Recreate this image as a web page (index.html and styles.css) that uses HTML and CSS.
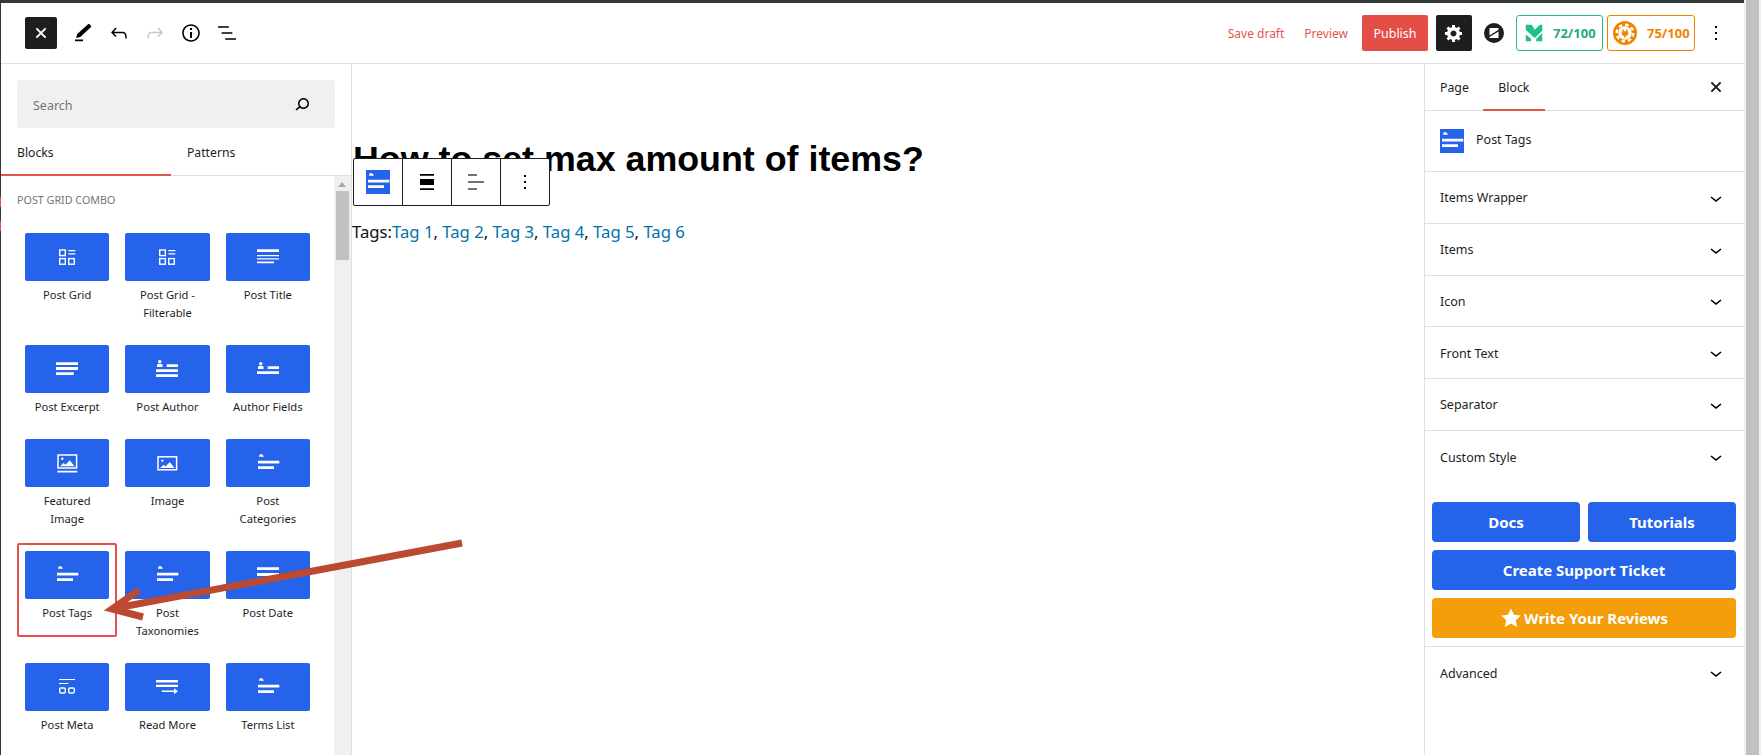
FILE: index.html
```html
<!DOCTYPE html>
<html lang="en">
<head>
<meta charset="utf-8">
<title>Post Tags</title>
<link rel="stylesheet" href="styles.css">
</head>
<body>
<svg class="defs" aria-hidden="true">
  <symbol id="i-grid" viewBox="0 0 24 24"><g fill="none" stroke="#fff" stroke-width="1.4"><rect x="4.7" y="5" width="5.6" height="5.6"/><rect x="4.7" y="13.6" width="5.6" height="5.6"/><rect x="13.7" y="13.6" width="5.6" height="5.6"/></g><path fill="#fff" d="M13.3 5h7v1.3h-7zM13.3 8.2h7v1.3h-7z"/></symbol>
  <symbol id="i-title" viewBox="0 0 24 24"><path fill="#fff" d="M1 4.3h22V7H1zM1 10h22v1.2H1zM1 13.2h22v1.2H1zM1 16.6h17v1.6H1z"/></symbol>
  <symbol id="i-excerpt" viewBox="0 0 24 24"><path fill="#fff" d="M1 5.3h22V8H1zM1 10h22v3H1zM1 15.3h17.7v2.7H1z"/></symbol>
  <symbol id="i-author" viewBox="0 0 24 24"><circle cx="4.7" cy="4.6" r="1.7" fill="#fff"/><path fill="#fff" d="M2 10V8.2C2 7 3 6.8 4.7 6.8s2.9.2 2.9 1.4V10zM11.7 7.2H23V10H11.7zM1 12.2h22V15H1zM1 17.2h22V20H1z"/></symbol>
  <symbol id="i-fields" viewBox="0 0 24 24"><circle cx="4.7" cy="6.6" r="1.7" fill="#fff"/><path fill="#fff" d="M2 12v-1.8C2 9 3 8.8 4.7 8.8s2.9.2 2.9 1.4V12zM11.7 9.2H23V12H11.7zM1 14.2h22V17H1z"/></symbol>
  <symbol id="i-featured" viewBox="0 0 24 24"><rect x="3" y="4" width="18.6" height="13" fill="none" stroke="#fff" stroke-width="1.5"/><path fill="#fff" d="M2.3 19.7h20v1.9h-20zM5 15.3l3.6-3.3 2 1.7 4.1-4.4 4.8 6z"/><circle cx="7.3" cy="7.8" r="1.2" fill="#fff"/></symbol>
  <symbol id="i-image" viewBox="0 0 24 24"><rect x="3" y="5.8" width="18.6" height="13" fill="none" stroke="#fff" stroke-width="1.5"/><path fill="#fff" d="M5 17l3.6-3.3 2 1.7 4.1-4.4 4.8 6z"/><circle cx="7.3" cy="9.6" r="1.2" fill="#fff"/></symbol>
  <symbol id="i-tags" viewBox="0 0 24 24"><path fill="#fff" d="M3 5.8l.7-2.5h2.6l1.7 2.5zM2 9.7h21.3v2.7H2zM2 15.2h16V18H2z"/></symbol>
  <symbol id="i-date" viewBox="0 0 24 24"><path fill="#fff" d="M1 4.3h22V7H1zM1 10h22v3H1zM1 15.3h17v2H1z"/></symbol>
  <symbol id="i-meta" viewBox="0 0 24 24"><path fill="#fff" d="M4 4h16v1.1H4zM4 8h9.3v1.1H4z"/><rect x="4.7" y="13" width="5.6" height="5" rx="1.2" fill="none" stroke="#fff" stroke-width="1.4"/><rect x="13.7" y="13" width="5.6" height="5" rx="1.2" fill="none" stroke="#fff" stroke-width="1.4"/></symbol>
  <symbol id="i-more" viewBox="0 0 24 24"><path fill="#fff" d="M1 5h22v2.4H1zM1 9.7h22v2.4H1zM6.7 15.600h13.6v1.400H6.700zM19 13.300l4 3-4 3z"/></symbol>
  <symbol id="i-chevron" viewBox="0 0 24 24"><path d="M17.500 11.600L12 16l-5.500-4.400.9-1.200L12 14l4.500-3.600 1 1.200z"/></symbol>
  <symbol id="i-close" viewBox="0 0 24 24"><path d="M7.400 7.400l9.200 9.200M16.600 7.400l-9.200 9.200" fill="none" stroke-width="2"/></symbol>
  <symbol id="i-dots" viewBox="0 0 24 24"><path d="M13 19h-2v-2h2v2zm0-6h-2v-2h2v2zm0-6h-2V5h2v2z"/></symbol>
</svg>

<div class="page">
  <div class="strip"></div>
  <div class="app">
    <div class="topline"></div>
    <header class="header">
      <button class="close-btn"><svg class="ico-24 stroke-white"><use href="#i-close"/></svg></button>
      <div class="tools">
        <svg class="ico-24" viewBox="0 0 24 24"><path d="M4 20.200h8v-1.600H4zM5.200 17l1-4L16.800 3.400c.6-.5 1.400-.5 1.900 0l1.100 1.100c.5.5.5 1.300 0 1.800L9.300 16z"/></svg>
        <svg class="ico-24" viewBox="0 0 24 24"><path d="M18.300 11.700c-.6-.6-1.400-.9-2.300-.9H6.700l2.900-3.300-1.100-1-4.500 5L8.500 16l1-1-2.700-2.700H16c.5 0 .9.2 1.300.5 1 1 1 3.400 1 4.500v.3h1.500v-.2c0-1.500 0-4.300-1.500-5.700z"/></svg>
        <svg class="ico-24 faded" viewBox="0 0 24 24"><path d="M15.600 6.500l-1.100 1 2.900 3.300H8c-.9 0-1.700.3-2.300.9-1.400 1.500-1.400 4.200-1.400 5.600v.2h1.500v-.3c0-1.100 0-3.500 1-4.500.3-.3.7-.5 1.300-.5h9.200L14.500 15l1.100 1.100 4.600-4.600-4.600-5z"/></svg>
        <svg class="ico-24" viewBox="0 0 24 24"><path d="M12 3.200c-4.800 0-8.800 3.900-8.800 8.800 0 4.800 3.900 8.800 8.800 8.800 4.800 0 8.800-3.900 8.800-8.800 0-4.800-4-8.800-8.800-8.800zm0 16c-4 0-7.200-3.300-7.200-7.200C4.800 8 8 4.800 12 4.800s7.200 3.300 7.200 7.200c0 4-3.200 7.200-7.200 7.200zM11 17h2v-6h-2v6zm0-8h2V7h-2v2z"/></svg>
        <svg class="ico-24" viewBox="0 0 24 24"><path d="M13.800 5.200H3v1.500h10.800V5.200zm-3.600 12v1.500H21v-1.500H10.200zm7.200-6H6.600v1.500h10.800v-1.500z"/></svg>
      </div>
      <div class="actions">
        <a class="link save">Save draft</a>
        <a class="link preview">Preview</a>
        <button class="publish">Publish</button>
        <button class="settings"><svg class="ico-20 white" viewBox="0 0 20 20"><path d="M18 12h-2.180c-.17.7-.44 1.350-.81 1.930l1.540 1.540-2.100 2.100-1.540-1.540c-.58.36-1.230.63-1.910.79V19H8v-2.180c-.68-.16-1.330-.43-1.910-.79l-1.540 1.540-2.120-2.120 1.540-1.540c-.36-.58-.63-1.230-.79-1.910H1V9.030h2.170c.16-.7.44-1.350.8-1.940L2.430 5.550l2.100-2.100 1.540 1.540c.58-.37 1.240-.64 1.930-.81V2h3v2.180c.68.16 1.330.43 1.910.79l1.540-1.540 2.120 2.120-1.540 1.540c.36.59.64 1.240.8 1.940H18V12zm-8.500 1.500c1.660 0 3-1.340 3-3s-1.340-3-3-3-3 1.340-3 3 1.340 3 3 3z"/></svg></button>
        <svg class="logo" viewBox="0 0 20 20"><circle cx="10" cy="10" r="10" fill="#1e1e1e"/><path fill="#fff" d="M5.500 5h9v1.800L5.500 12.600zM14.500 8.400V15h-9v-.9z"/></svg>
        <div class="badge green">
          <svg class="badge-logo" viewBox="0 0 24 24"><path fill="#1fbf8c" d="M1 1h8l4 6.500L20 1h3v8l-10 9.500L1 8zM1 14l7 5.500V23H1zM23 12v11h-8v-3.500z"/></svg>
          <span>72/100</span>
        </div>
        <div class="badge orange">
          <svg class="badge-logo" viewBox="0 0 24 24"><circle cx="12" cy="12" r="12" fill="#f08300"/><circle cx="12" cy="12" r="6.800" fill="#fff"/><circle cx="12" cy="12" r="8.300" fill="none" stroke="#fff" stroke-width="2.400" stroke-dasharray="3.500 3"/><path fill="#f08300" d="M9.600 8h1.100v2.300h2.600V8h1.100v2.300h.8v2.200a2.700 2.700 0 0 1-2.600 2.600v2h-1.200v-2a2.700 2.700 0 0 1-2.600-2.600v-2.200h.8z"/></svg>
          <span>75/100</span>
        </div>
        <svg class="ico-24 dots"><use href="#i-dots"/></svg>
      </div>
    </header>

    <div class="main">
      <aside class="inserter">
        <div class="search">
          <span class="search-text">Search</span>
          <svg class="ico-24" viewBox="0 0 24 24"><path d="M13.500 6C10.500 6 8 8.500 8 11.500c0 1.100.3 2.100.9 3l-3.400 3 1 1.100 3.400-2.900c1 .9 2.200 1.400 3.600 1.400 3 0 5.500-2.500 5.500-5.500C19 8.500 16.500 6 13.500 6zm0 9.500c-2.200 0-4-1.800-4-4s1.800-4 4-4 4 1.800 4 4-1.800 4-4 4z"/></svg>
        </div>
        <div class="ins-tabs">
          <div class="ins-tab active">Blocks</div>
          <div class="ins-tab">Patterns</div>
        </div>
        <div class="ins-body">
          <div class="ins-list">
            <div class="section-title">Post Grid Combo</div>
            <div class="block-grid">
              <div class="block"><div class="tile"><svg class="ico-24"><use href="#i-grid"/></svg></div><div class="label">Post Grid</div></div>
              <div class="block"><div class="tile"><svg class="ico-24"><use href="#i-grid"/></svg></div><div class="label">Post Grid - Filterable</div></div>
              <div class="block"><div class="tile"><svg class="ico-24"><use href="#i-title"/></svg></div><div class="label">Post Title</div></div>
              <div class="block"><div class="tile"><svg class="ico-24"><use href="#i-excerpt"/></svg></div><div class="label">Post Excerpt</div></div>
              <div class="block"><div class="tile"><svg class="ico-24"><use href="#i-author"/></svg></div><div class="label">Post Author</div></div>
              <div class="block"><div class="tile"><svg class="ico-24"><use href="#i-fields"/></svg></div><div class="label">Author Fields</div></div>
              <div class="block"><div class="tile"><svg class="ico-24"><use href="#i-featured"/></svg></div><div class="label">Featured Image</div></div>
              <div class="block"><div class="tile"><svg class="ico-24"><use href="#i-image"/></svg></div><div class="label">Image</div></div>
              <div class="block"><div class="tile"><svg class="ico-24"><use href="#i-tags"/></svg></div><div class="label">Post Categories</div></div>
              <div class="block"><div class="tile"><svg class="ico-24"><use href="#i-tags"/></svg></div><div class="label">Post Tags</div></div>
              <div class="block"><div class="tile"><svg class="ico-24"><use href="#i-tags"/></svg></div><div class="label">Post Taxonomies</div></div>
              <div class="block"><div class="tile"><svg class="ico-24"><use href="#i-date"/></svg></div><div class="label">Post Date</div></div>
              <div class="block"><div class="tile"><svg class="ico-24"><use href="#i-meta"/></svg></div><div class="label">Post Meta</div></div>
              <div class="block"><div class="tile"><svg class="ico-24"><use href="#i-more"/></svg></div><div class="label">Read More</div></div>
              <div class="block"><div class="tile"><svg class="ico-24"><use href="#i-tags"/></svg></div><div class="label">Terms List</div></div>
            </div>
          </div>
          <div class="ins-scroll"><div class="ins-up"></div><div class="ins-thumb"></div></div>
        </div>
      </aside>

      <main class="canvas">
        <h1 class="post-title">How to set max amount of items?</h1>
        <div class="block-toolbar">
          <div class="tb-cell"><svg class="ico-24 tb-blue"><use href="#i-tags"/></svg></div>
          <div class="tb-cell"><svg class="ico-24" viewBox="0 0 24 24"><path d="M5 4h14v1.700H5zM5 9h14v6H5zM5 18.300h14V20H5z"/></svg></div>
          <div class="tb-cell"><svg class="ico-24" viewBox="0 0 24 24"><path d="M4 4.200h9v1.600H4zM4 11.200h16v1.600H4zM4 18.200h9v1.600H4z" fill="#444"/></svg></div>
          <div class="tb-cell"><svg class="ico-24"><use href="#i-dots"/></svg></div>
        </div>
        <p class="post-tags">Tags:<a class="tag">Tag 1</a>, <a class="tag">Tag 2</a>, <a class="tag">Tag 3</a>, <a class="tag">Tag 4</a>, <a class="tag">Tag 5</a>, <a class="tag">Tag 6</a></p>
      </main>

      <aside class="panel">
        <div class="panel-tabs">
          <div class="panel-tab">Page</div>
          <div class="panel-tab active">Block</div>
          <svg class="ico-24 panel-x"><use href="#i-close"/></svg>
        </div>
        <div class="panel-block">
          <svg class="ico-24 tb-blue"><use href="#i-tags"/></svg>
          <span class="panel-block-name">Post Tags</span>
        </div>
        <div class="acc">Items Wrapper<svg class="ico-24"><use href="#i-chevron"/></svg></div>
        <div class="acc">Items<svg class="ico-24"><use href="#i-chevron"/></svg></div>
        <div class="acc">Icon<svg class="ico-24"><use href="#i-chevron"/></svg></div>
        <div class="acc">Front Text<svg class="ico-24"><use href="#i-chevron"/></svg></div>
        <div class="acc">Separator<svg class="ico-24"><use href="#i-chevron"/></svg></div>
        <div class="acc last">Custom Style<svg class="ico-24"><use href="#i-chevron"/></svg></div>
        <div class="help">
          <a class="cta">Docs</a>
          <a class="cta">Tutorials</a>
          <a class="cta wide">Create Support Ticket</a>
          <a class="cta wide amber"><svg class="star" viewBox="0 0 24 24"><path fill="#fff" d="M12 1.500l3.200 6.900 7.500.9-5.500 5.100 1.400 7.400L12 18.100l-6.600 3.700 1.400-7.400L1.300 9.300l7.500-.9z"/></svg>Write Your Reviews</a>
        </div>
        <div class="acc last">Advanced<svg class="ico-24"><use href="#i-chevron"/></svg></div>
      </aside>
    </div>
  </div>
  <div class="page-scroll"><div class="page-thumb"></div></div>

  <div class="mark"></div>
  <svg class="arrow" viewBox="0 0 1761 755"><g fill="none" stroke="#bc4a33" stroke-width="7"><path d="M462 543L116 608"/><path d="M139 590L112 609 143 617"/></g></svg>
</div>
</body>
</html>
```
FILE: styles.css
```css
* { box-sizing: border-box; }
html, body { margin: 0; padding: 0; height: 100%; overflow: hidden; background: #fff; }
body { font-family: "Noto Sans", "Open Sans", sans-serif; font-size: 13px; color: #1e1e1e; }
button { font: inherit; border: 0; padding: 0; margin: 0; }
svg { display: block; flex: none; }
.defs { position: absolute; width: 0; height: 0; }
.ico-24 { width: 24px; height: 24px; }
.ico-20 { width: 20px; height: 20px; }
.white { fill: #fff; }
.stroke-white { stroke: #fff; }
.faded { fill: #c8c8c8; }

.page { position: relative; display: flex; width: 1761px; height: 755px; overflow: hidden; }
.strip {
  width: 1px;
  background: linear-gradient(#32373c 0 197px, #e2514a 197px 207px, #32373c 207px 221px, #e2514a 221px 231px, #32373c 231px);
}
.app { width: 1743px; display: flex; flex-direction: column; }
.topline { height: 3px; background: #32373c; }
.page-scroll { width: 17px; padding-left: 2px; background: #f0f0f0; }
.page-thumb { width: 13px; height: 100%; background: #c1c1c1; }

.header { height: 61px; display: flex; align-items: center; padding-left: 24px; border-bottom: 1px solid #e0e0e0; flex: none; }
.close-btn { width: 32px; height: 32px; background: #1e1e1e; border-radius: 2px; display: flex; align-items: center; justify-content: center; }
.tools { display: flex; gap: 12px; margin-left: 14px; }
.actions { margin-left: auto; display: flex; align-items: center; }
.link { color: #e2574c; font-size: 12px; white-space: nowrap; }
.save { margin-right: 20px; }
.preview { margin-right: 14px; }
.publish { width: 66px; height: 36px; background: #e34f47; color: #fff; border-radius: 2px; font-size: 12.5px; margin-right: 8px; }
.settings { width: 36px; height: 36px; background: #1e1e1e; border-radius: 2px; display: flex; align-items: center; justify-content: center; margin-right: 12px; }
.logo { width: 20px; height: 20px; margin-right: 12px; }
.badge { height: 36px; border-radius: 3px; display: flex; align-items: center; font-weight: 700; font-size: 13px; background: #fff; }
.badge.green { width: 87px; border: 1px solid #1fbf8c; color: #1fa97f; padding-left: 8px; gap: 10px; margin-right: 4px; }
.badge.orange { width: 88px; border: 1px solid #f08300; color: #f08300; padding-left: 5px; gap: 10px; }
.badge-logo { width: 24px; height: 24px; }
.badge.green .badge-logo { width: 18px; height: 18px; }
.dots { margin-left: 9px; margin-right: 16px; }

.main { flex: 1; display: flex; min-height: 0; }

.inserter { width: 351px; border-right: 1px solid #e0e0e0; display: flex; flex-direction: column; }
.search { margin: 16px 0 0 16px; width: 318px; height: 48px; flex: none; background: #f0f0f0; border-radius: 2px; display: flex; align-items: center; justify-content: space-between; padding: 2px 21px 0 16px; }
.search svg { margin-top: -3px; }
.search-text { color: #757575; font-size: 12.5px; }
.ins-tabs { height: 48px; flex: none; display: flex; border-bottom: 1px solid #e0e0e0; }
.ins-tab { width: 170px; padding-left: 16px; line-height: 50px; font-size: 12.2px; }
.ins-tab.active { box-shadow: inset 0 -2px 0 #e2574c; margin-bottom: -1px; height: 48px; }
.ins-body { flex: 1; display: flex; min-height: 0; }
.ins-list { width: 333px; overflow: hidden; }
.section-title { margin: 16px 0 17px 16px; font-size: 10.75px; line-height: 16px; text-transform: uppercase; color: #757575; }
.block-grid { margin-left: 16px; width: 301px; display: grid; grid-template-columns: repeat(3, 1fr); row-gap: 8px; }
.block { padding: 8px 8px 7px; }
.tile { height: 48px; background: #2563eb; border-radius: 2px; display: flex; align-items: center; justify-content: center; margin-bottom: 5px; }
.label { font-size: 11.2px; line-height: 18px; text-align: center; padding: 0 4px; }
.ins-scroll { width: 17px; background: #f0f0f0; padding-left: 2px; }
.ins-up { width: 0; height: 0; margin: 6px 0 4px 2px; border-left: 4px solid transparent; border-right: 4px solid transparent; border-bottom: 5px solid #a8a8a8; }
.ins-thumb { width: 13px; height: 69px; background: #c1c1c1; margin-top: 2px; }

.canvas { position: relative; flex: 1; min-width: 0; }
.post-title { margin: 76px 0 0 1px; font-family: "Liberation Sans", Arial, sans-serif; font-size: 35.8px; line-height: 38px; font-weight: 700; color: #000; white-space: nowrap; }
.block-toolbar { position: absolute; left: 1px; top: 94px; height: 48px; display: flex; background: #fff; border: 1px solid #1e1e1e; border-radius: 2px; }
.tb-cell { width: 49px; display: flex; align-items: center; justify-content: center; border-left: 1px solid #1e1e1e; }
.tb-cell:first-child { border-left: 0; width: 48px; }
.tb-blue { background: #2563eb; }
.post-tags { margin: 41px 0 0; font-size: 16.7px; line-height: 26px; color: #111; }
.tag { color: #0073aa; }

.panel { width: 320px; border-left: 1px solid #e0e0e0; display: flex; flex-direction: column; }
.panel-tabs { height: 47px; flex: none; display: flex; align-items: center; border-bottom: 1px solid #e0e0e0; padding-left: 15px; }
.panel-tab { font-size: 12.3px; height: 47px; line-height: 47px; }
.panel-tab.active { margin-left: 14px; width: 62px; text-align: center; box-shadow: inset 0 -2px 0 #e2574c; }
.panel-x { margin-left: auto; margin-right: 16px; stroke: #1e1e1e; }
.panel-block { height: 61px; flex: none; display: flex; align-items: center; gap: 12px; padding-left: 15px; border-bottom: 1px solid #e0e0e0; font-size: 12.5px; }
.panel-block-name { margin-bottom: 3px; }
.acc { height: 51.75px; flex: none; display: flex; align-items: center; justify-content: space-between; padding: 1px 16px 0 15px; border-bottom: 1px solid #e0e0e0; font-size: 12.5px; }
.acc.last { border-bottom: 0; }
.help { display: grid; grid-template-columns: 1fr 1fr; gap: 8px; padding: 19.5px 8px 8px 7px; border-bottom: 1px solid #e0e0e0; }
.cta { height: 40px; background: #2563eb; color: #fff; border-radius: 4px; display: flex; align-items: center; justify-content: center; font-weight: 700; font-size: 15px; }
.cta.wide { grid-column: 1 / -1; }
.cta.amber { background: #f59e0b; }
.star { width: 22px; height: 22px; margin-right: 2px; }

.mark { position: absolute; left: 17px; top: 543px; width: 100px; height: 94px; border: 2px solid #e2514a; border-radius: 2px; }
.arrow { position: absolute; left: 0; top: 0; width: 1761px; height: 755px; pointer-events: none; }
```
